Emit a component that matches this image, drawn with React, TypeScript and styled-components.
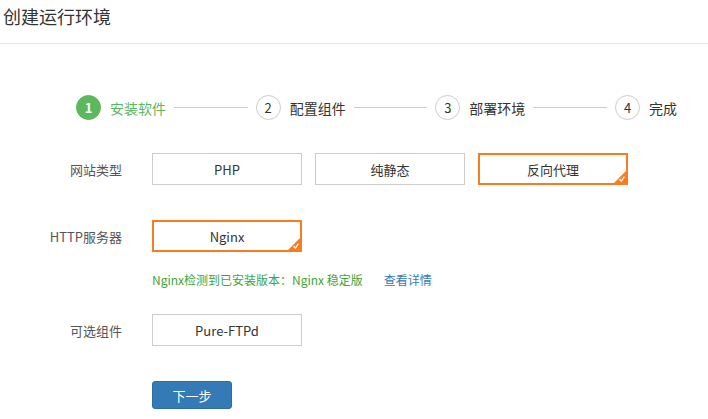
import React from "react"
import styled, { createGlobalStyle } from "styled-components"

const GlobalStyle = createGlobalStyle`
  body {
    margin: 0;
    background: #fff;
    font-family: "Noto Sans CJK SC", "Noto Sans", sans-serif;
    color: #333;
  }
`

const Page = styled.div`
  width: 708px;
  height: 419px;
  overflow: hidden;
`

const Header = styled.div`
  height: 43px;
  border-bottom: 1px solid #e5e5e5;
  padding-left: 3px;
  font-size: 18px;
  line-height: 32px;
  color: #333;
`

const Steps = styled.div`
  display: flex;
  align-items: center;
  width: 601px;
  margin: 51px 0 0 76px;
`

const Step = styled.div`
  display: flex;
  align-items: center;
  gap: 9px;
  flex-shrink: 0;
`

const Circle = styled.span<{ $active?: boolean }>`
  width: 25px;
  height: 25px;
  box-sizing: border-box;
  border-radius: 50%;
  display: flex;
  align-items: center;
  justify-content: center;
  font-size: 13px;
  font-weight: ${p => (p.$active ? "bold" : "normal")};
  color: ${p => (p.$active ? "#fff" : "#333")};
  background: ${p => (p.$active ? "#5cb85c" : "#fff")};
  border: 1px solid ${p => (p.$active ? "#5cb85c" : "#ccc")};
`

const StepLabel = styled.span<{ $active?: boolean }>`
  font-size: 14px;
  color: ${p => (p.$active ? "#5cb85c" : "#333")};
`

const Connector = styled.span`
  flex: 1;
  height: 1px;
  background: #ccc;
  margin: 0 8px;
`

const Form = styled.div`
  display: flex;
  flex-direction: column;
`

const Row = styled.div<{ $top: number }>`
  display: flex;
  align-items: center;
  margin-top: ${p => p.$top}px;
`

const Label = styled.div`
  width: 122px;
  text-align: right;
  font-size: 13px;
  color: #555;
  margin-right: 30px;
  flex-shrink: 0;
`

const Options = styled.div`
  display: flex;
  gap: 13px;
`

const Option = styled.div<{ $selected?: boolean }>`
  position: relative;
  width: 150px;
  height: 32px;
  box-sizing: border-box;
  border: ${p => (p.$selected ? "2px solid #f87d21" : "1px solid #ccc")};
  display: flex;
  align-items: center;
  justify-content: center;
  font-size: 13px;
  color: #333;
  background: #fff;
`

const Corner = styled.svg`
  position: absolute;
  right: 0;
  bottom: 0;
  width: 12px;
  height: 12px;
`

const Notice = styled.div`
  margin: 20px 0 0 152px;
  font-size: 12px;
  line-height: 16px;
  color: #3fa53a;
  display: flex;
`

const Detail = styled.a`
  color: #337ab7;
  margin-left: 21px;
  text-decoration: none;
`

const NextButton = styled.button`
  margin: 35px 0 0 152px;
  width: 80px;
  height: 28px;
  border: 1px solid #2e6da4;
  border-radius: 3px;
  background: #337ab7;
  color: #fff;
  font-family: inherit;
  font-size: 13px;
  padding: 0;
  align-self: flex-start;
`

function Choice({ text, selected }: { text: string; selected?: boolean }) {
  return (
    <Option $selected={selected}>
      {text}
      {selected && (
        <Corner viewBox="0 0 12 12">
          <polygon points="12,0 12,12 0,12" fill="#f87d21" />
          <path d="M5.5 8.2 L7.4 10 L10.4 5.6" stroke="#fff" strokeWidth="1.3" fill="none" />
        </Corner>
      )}
    </Option>
  )
}

const steps = ["安装软件", "配置组件", "部署环境", "完成"]

export default function App() {
  return (
    <Page>
      <GlobalStyle />
      <Header>创建运行环境</Header>
      <Steps>
        {steps.map((s, i) => (
          <React.Fragment key={s}>
            {i > 0 && <Connector />}
            <Step>
              <Circle $active={i === 0}>{i + 1}</Circle>
              <StepLabel $active={i === 0}>{s}</StepLabel>
            </Step>
          </React.Fragment>
        ))}
      </Steps>
      <Form>
        <Row $top={33}>
          <Label>网站类型</Label>
          <Options>
            <Choice text="PHP" />
            <Choice text="纯静态" />
            <Choice text="反向代理" selected />
          </Options>
        </Row>
        <Row $top={35}>
          <Label>HTTP服务器</Label>
          <Options>
            <Choice text="Nginx" selected />
          </Options>
        </Row>
        <Notice>
          Nginx检测到已安装版本：Nginx 稳定版
          <Detail href="#">查看详情</Detail>
        </Notice>
        <Row $top={26}>
          <Label>可选组件</Label>
          <Options>
            <Choice text="Pure-FTPd" />
          </Options>
        </Row>
        <NextButton>下一步</NextButton>
      </Form>
    </Page>
  )
}
